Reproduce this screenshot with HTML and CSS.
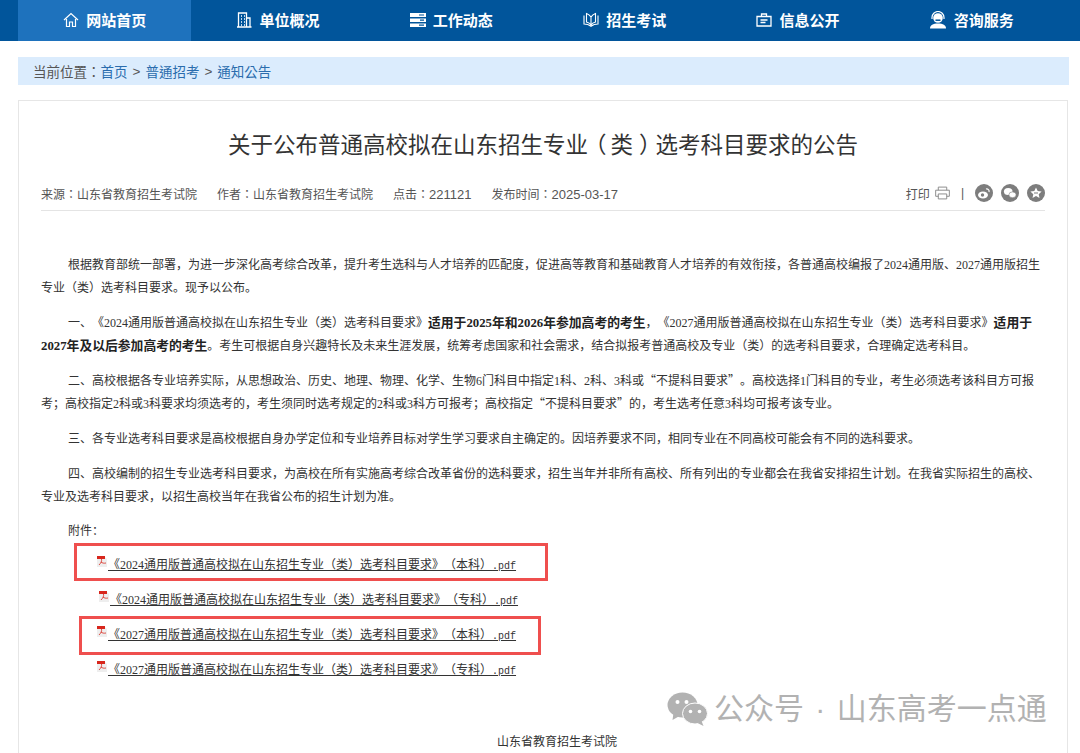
FILE: index.html
```html
<!DOCTYPE html>
<html lang="zh-CN">
<head>
<meta charset="utf-8">
<title>关于公布普通高校拟在山东招生专业（类）选考科目要求的公告</title>
<link rel="stylesheet" href="styles.css">
</head>
<body>
<header class="topbar">
  <nav class="nav">
    <a class="nav-item active"><svg class="nav-icon" viewBox="0 0 16 16"><path d="M1 8 8 1.500 15 8M3.500 7v7.500h3V10h3v4.500h3V7" fill="none" stroke="#fff" stroke-width="1.200"/></svg>网站首页</a>
    <a class="nav-item"><svg class="nav-icon" viewBox="0 0 16 16"><path d="M2.500 15V1h8v14M10.500 6h3.500v9M1 15h14.500M5 4h1M8 4h1M5 7h1M8 7h1M5 10h1M8 10h1M5 13h1M8 13h1" fill="none" stroke="#fff" stroke-width="1.300"/></svg>单位概况</a>
    <a class="nav-item"><svg class="nav-icon" viewBox="0 0 16 16"><path d="M0 1h16v4H0zM0 6.500h16v3.500H0zM0 11.500h16V15H0z" fill="#fff"/><path d="M9 3h5M10 8.200h4M9 13.200h5" stroke="#01559b" stroke-width="1.200"/></svg>工作动态</a>
    <a class="nav-item"><svg class="nav-icon" viewBox="0 0 16 16"><path d="M8 5C7 3.500 5 2 3.500 1.500V10c2 .5 3.500 1.500 4.500 3 1-1.500 2.500-2.500 4.500-3V1.500C11 2 9 3.500 8 5zM8 5v8M1 3.500V12c3 0 5 .7 7 2.200 2-1.500 4-2.200 7-2.200V3.500" fill="none" stroke="#fff" stroke-width="1.100"/></svg>招生考试</a>
    <a class="nav-item"><svg class="nav-icon" viewBox="0 0 16 16"><path d="M1 4.500h14V14H1zM5.500 4.500V2h5v2.500M4.500 8h7M4.500 10.500h5" fill="none" stroke="#fff" stroke-width="1.300"/></svg>信息公开</a>
    <a class="nav-item"><svg class="nav-icon wide" viewBox="0 0 18 18"><circle cx="9" cy="7" r="4.800" fill="#fff"/><path d="M3 8V6.500a6 6 0 0 1 12 0V8" fill="none" stroke="#fff" stroke-width="1.200"/><path d="M1 17.500c0-3.500 3-5 8-5s8 1.500 8 5z" fill="#fff"/><path d="M6.500 9.200h5" stroke="#01559b" stroke-width="1.500"/></svg>咨询服务</a>
  </nav>
</header>

<div class="crumbs" lang="zh-TW">当前位置：<a>首页</a><span class="sep">&gt;</span><a>普通招考</a><span class="sep">&gt;</span><a>通知公告</a></div>

<main class="article">
  <h1 class="title">关于公布普通高校拟在山东招生专业<span class="paren-open">（</span>类<span class="paren-close">）</span>选考科目要求的公告</h1>
  <div class="meta" lang="zh-TW">
    <div class="meta-left">
      <span>来源：山东省教育招生考试院</span>
      <span>作者：山东省教育招生考试院</span>
      <span>点击：<span class="num">221121</span></span>
      <span>发布时间：<span class="num">2025-03-17</span></span>
    </div>
    <div class="meta-right">
      <span>打印</span>
      <svg class="print" viewBox="0 0 16 14"><path d="M3.500 4V.7h9V4M3.500 10.500H.7V4h14.600v6.500h-2.800M3.500 8h9v5.300h-9z" fill="none" stroke="#888" stroke-width="1"/></svg>
      <span class="bar">|</span>
      <span class="share">
        <svg viewBox="0 0 18 18"><circle cx="9" cy="9" r="9" fill="#7d7d7d"/><ellipse cx="8" cy="11" rx="5" ry="3.500" fill="#fff"/><circle cx="7.500" cy="11" r="1.700" fill="#7d7d7d"/><path d="M11 5c2-.5 3.500 1 3 3" fill="none" stroke="#fff" stroke-width="1.200"/></svg>
        <svg viewBox="0 0 18 18"><circle cx="9" cy="9" r="9" fill="#7d7d7d"/><ellipse cx="7.200" cy="7.500" rx="4.300" ry="3.500" fill="#fff"/><ellipse cx="11.500" cy="10.800" rx="3.600" ry="2.900" fill="#fff" stroke="#7d7d7d" stroke-width=".6"/></svg>
        <svg viewBox="0 0 18 18"><circle cx="9" cy="9" r="9" fill="#7d7d7d"/><path d="M9 3.500l1.700 3.600 3.900.5-2.900 2.600.8 3.800L9 12.100 5.500 14l.8-3.800-2.900-2.600 3.900-.5z" fill="#fff"/><path d="M7 9h4" stroke="#7d7d7d"/></svg>
      </span>
    </div>
  </div>

  <div class="content">
    <p>根据教育部统一部署，为进一步深化高考综合改革，提升考生选科与人才培养的匹配度，促进高等教育和基础教育人才培养的有效衔接，各普通高校编报了2024通用版、2027通用版招生专业（类）选考科目要求。现予以公布。</p>
    <p>一、《2024通用版普通高校拟在山东招生专业（类）选考科目要求》<b>适用于2025年和2026年参加高考的考生</b>，《2027通用版普通高校拟在山东招生专业（类）选考科目要求》<b>适用于2027年及以后参加高考的考生</b>。考生可根据自身兴趣特长及未来生涯发展，统筹考虑国家和社会需求，结合拟报考普通高校及专业（类）的选考科目要求，合理确定选考科目。</p>
    <p>二、高校根据各专业培养实际，从思想政治、历史、地理、物理、化学、生物6门科目中指定1科、2科、3科或<span class="q">“</span>不提科目要求<span class="q">”</span>。高校选择1门科目的专业，考生必须选考该科目方可报考；高校指定2科或3科要求均须选考的，考生须同时选考规定的2科或3科方可报考；高校指定<span class="q">“</span>不提科目要求<span class="q">”</span>的，考生选考任意3科均可报考该专业。</p>
    <p>三、各专业选考科目要求是高校根据自身办学定位和专业培养目标对学生学习要求自主确定的。因培养要求不同，相同专业在不同高校可能会有不同的选科要求。</p>
    <p>四、高校编制的招生专业选考科目要求，为高校在所有实施高考综合改革省份的选科要求，招生当年并非所有高校、所有列出的专业都会在我省安排招生计划。在我省实际招生的高校、专业及选考科目要求，以招生高校当年在我省公布的招生计划为准。</p>
  </div>

  <div class="attachments">
    <div class="attach-label">附件：</div>
    <a class="file"><svg class="pdf" viewBox="0 0 10 11"><path d="M0 0h7l3 3v8H0z" fill="#eee"/><path d="M0 0h8v3H0z" fill="#d8261c"/><path d="M2 9c2-2 3-4 2.500-6M4 6c1 1 3 1.500 5 1" fill="none" stroke="#d8261c" stroke-width=".8"/></svg><span class="file-name">《2024通用版普通高校拟在山东招生专业（类）选考科目要求》（本科）<span class="ext">.pdf</span></span></a>
    <a class="file shifted"><svg class="pdf" viewBox="0 0 10 11"><path d="M0 0h7l3 3v8H0z" fill="#eee"/><path d="M0 0h8v3H0z" fill="#d8261c"/><path d="M2 9c2-2 3-4 2.500-6M4 6c1 1 3 1.500 5 1" fill="none" stroke="#d8261c" stroke-width=".8"/></svg><span class="file-name">《2024通用版普通高校拟在山东招生专业（类）选考科目要求》（专科）<span class="ext">.pdf</span></span></a>
    <a class="file"><svg class="pdf" viewBox="0 0 10 11"><path d="M0 0h7l3 3v8H0z" fill="#eee"/><path d="M0 0h8v3H0z" fill="#d8261c"/><path d="M2 9c2-2 3-4 2.500-6M4 6c1 1 3 1.500 5 1" fill="none" stroke="#d8261c" stroke-width=".8"/></svg><span class="file-name">《2027通用版普通高校拟在山东招生专业（类）选考科目要求》（本科）<span class="ext">.pdf</span></span></a>
    <a class="file"><svg class="pdf" viewBox="0 0 10 11"><path d="M0 0h7l3 3v8H0z" fill="#eee"/><path d="M0 0h8v3H0z" fill="#d8261c"/><path d="M2 9c2-2 3-4 2.500-6M4 6c1 1 3 1.500 5 1" fill="none" stroke="#d8261c" stroke-width=".8"/></svg><span class="file-name">《2027通用版普通高校拟在山东招生专业（类）选考科目要求》（专科）<span class="ext">.pdf</span></span></a>
    <div class="mark mark-one"></div>
    <div class="mark mark-two"></div>
  </div>

  <div class="signature">山东省教育招生考试院</div>
</main>

<div class="watermark">
  <svg class="wm-icon" viewBox="0 0 40 34"><ellipse cx="15" cy="13" rx="15" ry="12.500" fill="#b2b2b2"/><path d="M6 21l-1 7 7-4z" fill="#b2b2b2"/><circle cx="10" cy="10" r="2" fill="#fff"/><circle cx="19" cy="10" r="2" fill="#fff"/><ellipse cx="27.500" cy="21.500" rx="12.500" ry="10.500" fill="#b2b2b2" stroke="#fff" stroke-width="1"/><path d="M34 29l2 5-6-3z" fill="#b2b2b2"/><circle cx="23" cy="19.500" r="1.800" fill="#fff"/><circle cx="32" cy="19.500" r="1.800" fill="#fff"/></svg>
  <span class="wm-text">公众号 · 山东高考一点通</span>
</div>
```
FILE: styles.css
```css
* { box-sizing: border-box; }
html, body { margin: 0; padding: 0; height: 753px; overflow: hidden; }
body {
  position: relative;
  background: #fff;
  color: #333;
  font-family: "Liberation Sans", "Noto Sans CJK SC", sans-serif;
  font-size: 12px;
  text-spacing-trim: space-all;
}
.topbar { height: 41px; background: #01559b; padding: 0 22px 0 18px; }
.nav { display: grid; grid-template-columns: repeat(6, 173.33px); height: 100%; }
.nav-item {
  display: flex; align-items: center; justify-content: center; gap: 7px;
  padding-bottom: 2px;
  color: #fff; font-size: 15px; font-weight: 700;
}
.nav-item.active { background: #1e72bd; }
.nav-icon { width: 16px; height: 16px; flex: none; }
.nav-icon.wide { width: 18px; height: 18px; }

.crumbs {
  margin: 16px 11px 0 18px; height: 28px; padding-left: 15px;
  display: flex; align-items: center;
  background: #dbecfd; color: #555; font-size: 13.500px;
  font-family: "Liberation Sans", "Noto Sans CJK TC", sans-serif;
}
.crumbs a { color: #2a6cad; }
.crumbs .sep { margin: 0 5px; }

.article {
  margin: 15px 12px 0 18px; height: 700px; padding: 0 22px;
  border: 1px solid #e6e6e6;
}
.title {
  margin: 0; padding-top: 29px; height: 77px;
  text-align: center; font-size: 22.500px; line-height: 32px; font-weight: 400; color: #333;
}
.paren-open { display: inline-block; transform: translateX(-4px); }
.paren-close { display: inline-block; transform: translateX(6px); }
.meta {
  display: flex; justify-content: space-between; align-items: center;
  height: 33px; padding-bottom: 2px; border-bottom: 1px solid #e4e4e4; color: #555;
  font-family: "Liberation Sans", "Noto Sans CJK TC", sans-serif;
}
.meta-left { display: flex; gap: 20px; }
.meta-right { display: flex; align-items: center; }
.num { font-size: 13px; }
.print { width: 15px; height: 14px; margin-left: 5px; }
.bar { margin: 0 11px; color: #555; }
.share { display: flex; gap: 8px; }
.share svg { width: 18px; height: 18px; }

.content {
  padding-top: 43px; color: #333;
  font-family: "Liberation Serif", "Noto Sans CJK SC", serif;
}
.content p { margin: 0 0 12px; line-height: 23px; text-indent: 27px; }
.content p:last-child { margin-bottom: 11px; }
.content b { font-weight: 700; font-size: 12.800px; line-height: 0; color: #222; }
.content .q { font-family: "Noto Sans CJK SC", sans-serif; line-height: 0; }

.attachments { position: relative; }
.attach-label { padding-left: 27px; line-height: 23px; }
.file {
  display: flex; align-items: center; height: 35px; padding-left: 56px;
  color: #333; white-space: nowrap;
}
.attach-label + .file { margin-top: 3px; }
.file.shifted { padding-left: 58px; }
.file-name {
  font-family: "Liberation Serif", "Noto Sans CJK SC", serif;
  text-decoration: underline;
}
.ext { font-family: "Liberation Mono", monospace; font-size: 10px; }
.pdf { width: 10px; height: 11px; margin-right: 1px; margin-top: -5px; flex: none; }
.mark { position: absolute; border: 3px solid #ef4f4e; }
.mark-one { left: 33px; top: 23px; width: 474px; height: 38px; }
.mark-two { left: 38px; top: 96px; width: 462px; height: 39px; }

.signature { text-align: center; margin-top: 46px; padding-left: 28px; color: #333; }

.watermark {
  position: absolute; left: 667px; top: 692px;
  display: flex; align-items: center; gap: 6px;
  color: #b2b2b2; font-size: 30px; line-height: 34px; white-space: nowrap;
}
.wm-text { word-spacing: 3px; }
.wm-icon { width: 41px; height: 34px; }
```
